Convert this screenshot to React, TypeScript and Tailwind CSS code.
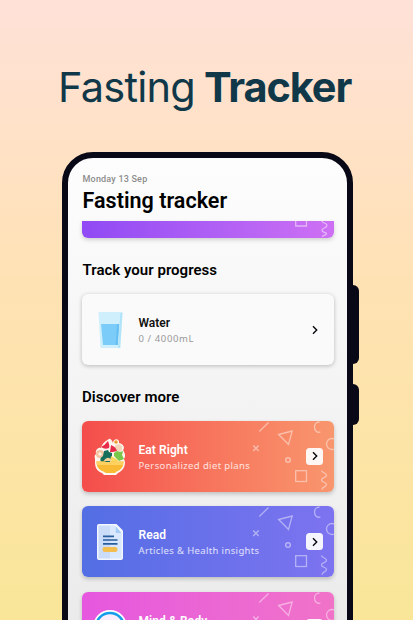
import React from "react";

function Shapes() {
  return (
    <svg className="absolute inset-y-0 right-0 h-[71px] w-[90px]" viewBox="0 0 90 71" fill="none" stroke="white" strokeOpacity=".45" strokeWidth="1.3">
      <path d="M15.300 10.500 24.500 1.500" />
      <path d="m34.700 13.500 13.500-3.500-3.700 13.500Z" />
      <path d="m9.200 24.500 5.500 5.500m0-5.500-5.500 5.500" strokeWidth="1.500" />
      <circle cx="44" cy="39" r="2.300" strokeWidth="1.500" />
      <rect x="51.700" y="49.700" width="10.800" height="10.800" />
      <path d="M76.500 11c-3.500 1-6-1.500-6-5 0-3 2-5 5-5" />
      <circle cx="88" cy="23" r="5.500" />
      <path d="M77.500 49.500c0 2.500 5 2 5 4.700s-5 2-5 4.700 5 2 5 4.700-4.500 2-4.500 5.200" />
    </svg>
  );
}

function Chevron() {
  return (
    <svg className="h-3 w-3" viewBox="0 0 12 12" fill="none" stroke="#08080c" strokeWidth="1.400">
      <path d="m4 2.300 3.700 3.700L4 9.700" />
    </svg>
  );
}

function Glass() {
  return (
    <svg className="ml-px h-9 w-[25px]" viewBox="0 0 25 36">
      <path d="M.5 0h24l-2.300 36H2.500Z" fill="#ceeffb" />
      <path d="M3 12h18l-1.500 21H5Z" fill="#7cccf9" />
      <path d="M19 12h2.300l-1.500 21h-2.300Z" fill="#68bff3" />
      <path d="M22.300 1h2.200l-2.300 35H20Z" fill="#b2e4f9" />
    </svg>
  );
}

function Salad() {
  return (
    <svg className="mr-px h-[37px] w-[32px]" viewBox="0 0 32 37">
      <path d="M1 21c-1-3 0-4 1-5-1-5 3-7 5-6 1-5 6-8 8-9 2-1 3 2 4 4 0-5 7-5 6 0 5 1 6 5 4 7 2 3 3 6 1 9l1 3c0 6-3 9-7 11l-2 2H10l-2-2C3 33 1 30 1 24Z" fill="#fff6ed" />
      <circle cx="6" cy="16" r="4" fill="#f4c2a0" />
      <circle cx="6" cy="16" r="1.800" fill="#fff0df" />
      <circle cx="24.500" cy="10" r="3.700" fill="#f5d5b9" />
      <circle cx="22" cy="4" r="1.800" fill="#ee9d32" />
      <path d="M7 9q4-2 7-6 2 5 1 7-4 2-8-1Z" fill="#e62c49" />
      <path d="m16 14 1-7q5 2 6 6l-4 1Z" fill="#e62c49" />
      <path d="m10 13 4-1 1 2 3 1v5l-2 4H7q-2-4 2-6Z" fill="#176f5b" />
      <path d="m20 15 3-2 3 1 3-1-1 4 2 4-5 2-5-5Z" fill="#79c84b" />
      <path d="m17 18 7 4-1 2h-7Z" fill="#f8d85d" />
      <path d="M10.500 23q3.500-5 7 0" fill="#f5d19c" stroke="#f5d19c" strokeWidth="1.500" />
      <path d="M2.500 23.500h8q4 2 8 0h11c0 6-3 8.500-7 10l-1.500 1.500h-9L9.500 33.500c-4-1.500-7-4-7-10" fill="#f9ba35" />
      <path d="M2.500 23.500h8q4 2 8 0h11l-.5 3.500H3Z" fill="#ffd160" />
    </svg>
  );
}

function Page() {
  return (
    <svg className="h-9 w-[26px]" viewBox="0 0 26 36">
      <path d="M2 0h17.500L26 6.500V34q0 2-2 2H2q-2 0-2-2V2q0-2 2-2" fill="#f2f7ff" />
      <path d="M1.500 1.500H13v33H1.500Z" fill="#cbdcf8" />
      <path d="M13 1.500h5v7.500h6.500v25.500H13Z" fill="#d9e8fd" />
      <path d="M18.500 2v7h6Z" fill="#a6ccf5" />
      <path d="M6 12.300h11M6 16h14.500M6 19.800h14.500" stroke="#285e9e" strokeWidth="1.700" />
      <rect x="5.500" y="23" width="15" height="5" rx="2.200" fill="#f3bd50" />
    </svg>
  );
}

function Mind() {
  return (
    <svg className="-mt-px h-[36px] w-[34px]" viewBox="0 0 34 36">
      <circle cx="17" cy="18" r="17" fill="#fff" />
      <circle cx="17" cy="18" r="14" fill="#f9eefb" stroke="#139eea" strokeWidth="2.500" />
    </svg>
  );
}

function Card({ icon, title, text, look, textLook = "" }: { icon: React.ReactNode; title: string; text?: string; look: string; textLook?: string }) {
  return (
    <div className={"relative flex h-[71px] shrink-0 items-center overflow-hidden rounded-[6px] pr-[11px] shadow-[0_2px_4px_#00000035] " + look}>
      <Shapes />
      <div className="flex w-[56px] shrink-0 justify-center">{icon}</div>
      <div className="flex-1 whitespace-nowrap pl-[0.500px] text-white">
        <div className="pt-[4px] text-[12px] font-semibold leading-[15px] tracking-[0.080px]">{title}</div>
        <div className={"h-[16px] font-['Noto_Sans',sans-serif] text-[9.500px] leading-[16px] text-white/80 " + textLook}>{text}</div>
      </div>
      <div className="relative flex h-[17px] w-[17px] items-center justify-center rounded-[3.500px] bg-white/93">
        <Chevron />
      </div>
    </div>
  );
}

export default function App() {
  return (
    <main className="flex h-[620px] w-[413px] flex-col overflow-hidden bg-linear-to-b from-[#ffe1d8] via-[#ffe2b4] via-45% to-[#f9e698] font-[Roboto,sans-serif]">
      <h1 className="flex h-[152px] shrink-0 whitespace-nowrap pl-[58px] pt-[61px] font-[Inter,sans-serif] text-[41.500px] leading-[52px] text-[#103849]">
        <span className="w-[146px] tracking-[-0.750px]">Fasting</span>
        <span className="font-bold tracking-[-1.100px]">Tracker</span>
      </h1>
      <div className="flex pl-[62px]">
        <div className="h-[520px] w-[291px] rounded-[31px] border-[6px] border-[#090816] bg-linear-to-b from-[#fdfdfd] to-[#e9e9e9] px-[14px]">
          <div className="flex flex-col">
            <div className="mt-[15px] pl-[0.500px] text-[9px] font-medium leading-[12px] tracking-[0.200px] text-[#8c8c8c]">Monday 13 Sep</div>
            <h2 className="mt-[2px] h-[34px] whitespace-nowrap pl-[0.500px] text-[21.500px] font-semibold leading-[27px] tracking-[0.030px] text-black">Fasting tracker</h2>
            <div className="relative h-[17px] w-[252px] overflow-hidden rounded-b-[6px] bg-linear-to-r from-[#9049f4] to-[#ce70f4] shadow-[0_2px_4px_#0000002b]">
              <svg className="absolute right-0 top-0 h-[17px] w-[42px]" viewBox="0 0 42 17" fill="none" stroke="#fff" strokeOpacity=".5" strokeWidth="1.300">
                <path d="M3.700 0v5h10.800V0M30 0c0 2.500 5 1.500 5 4.500s-5 2-5 4.700 4.500 1.500 4.500 3.500-4 1-4 3.300" />
              </svg>
            </div>
            <h3 className="mt-[22px] h-[34px] whitespace-nowrap pl-[0.500px] text-[15px] font-semibold leading-[21px] tracking-[0.020px] text-black">Track your progress</h3>
            <div className="flex h-[71px] w-[252px] items-center rounded-[6px] bg-[#fafafa] pr-[13px] shadow-[0_1px_4px_#00000040]">
              <div className="flex w-[56px] justify-center">
                <Glass />
              </div>
              <div className="flex-1 pl-[0.500px]">
                <div className="pt-[4px] text-[12px] font-semibold leading-[15px] text-[#111]">Water</div>
                <div className="font-['Noto_Sans',sans-serif] text-[9.500px] leading-[16px] tracking-[0.600px] text-[#989898]">0 / 4000mL</div>
              </div>
              <Chevron />
            </div>
            <h3 className="mt-[22px] h-[34px] whitespace-nowrap text-[15px] font-semibold leading-[21px] tracking-[0.020px] text-black">Discover more</h3>
            <div className="-mt-[0.500px] flex w-[252px] flex-col gap-[14.500px]">
              <Card icon={<Salad />} title="Eat Right" text="Personalized diet plans" look="bg-linear-to-r from-[#f44c4b] to-[#f8966e]" textLook="tracking-[0.370px]" />
              <Card icon={<Page />} title="Read" text="Articles & Health insights" look="bg-linear-to-r from-[#536ee4] to-[#7d73f0]" textLook="tracking-[0.360px]" />
              <Card icon={<Mind />} title="Mind & Body" look="bg-linear-to-r from-[#e657df] to-[#f073c8]" />
            </div>
          </div>
        </div>
        <div className="flex flex-col gap-[20px] pt-[133px]">
          <div className="h-[79px] w-[6px] rounded-r-[6px] bg-[#090816]" />
          <div className="h-[41px] w-[6px] rounded-r-[6px] bg-[#090816]" />
        </div>
      </div>
    </main>
  );
}
